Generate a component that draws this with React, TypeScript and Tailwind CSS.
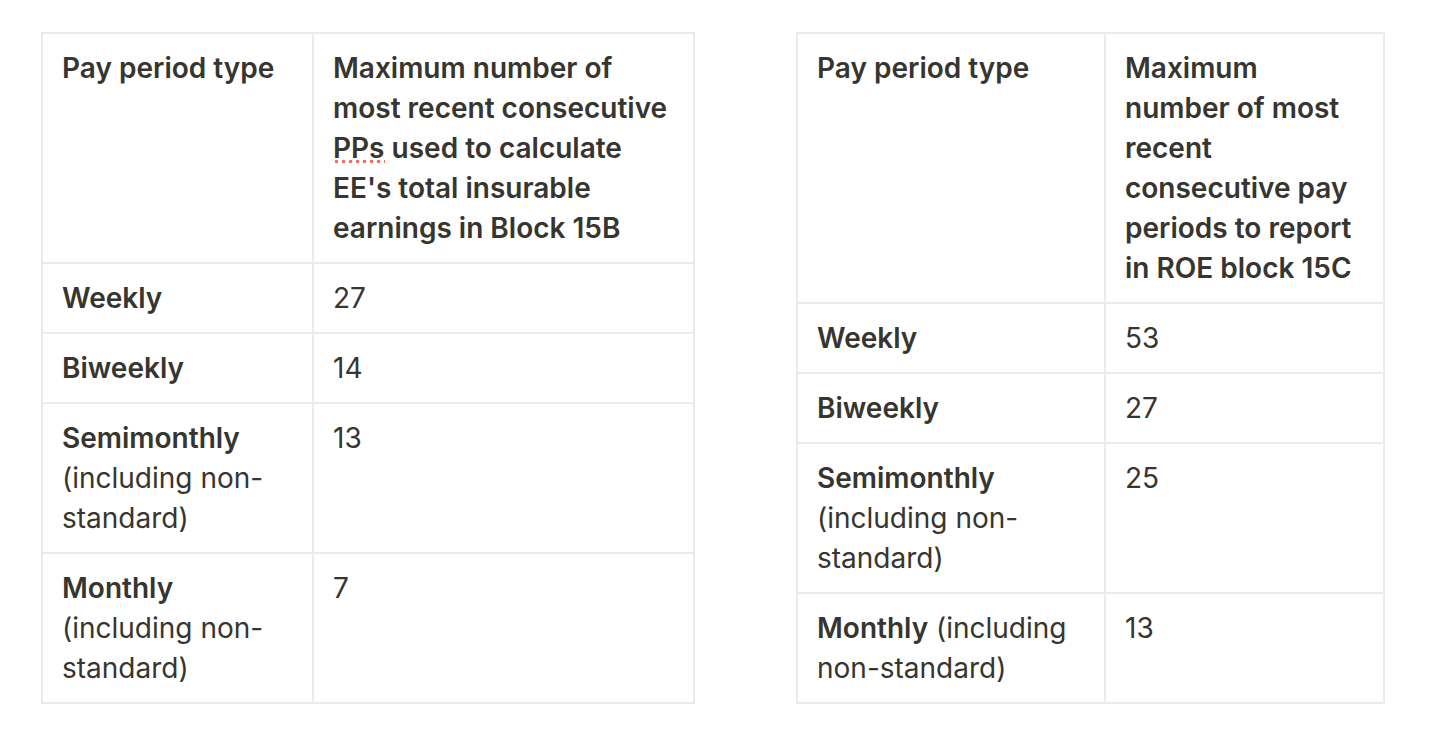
import React from 'react';

type Row = { label: string; note?: string; inline?: boolean; value: string };

const leftRows: Row[] = [
    { label: 'Weekly', value: '27' },
    { label: 'Biweekly', value: '14' },
    { label: 'Semimonthly', note: '(including non-standard)', value: '13' },
    { label: 'Monthly', note: '(including non-standard)', value: '7' },
];

const rightRows: Row[] = [
    { label: 'Weekly', value: '53' },
    { label: 'Biweekly', value: '27' },
    { label: 'Semimonthly', note: '(including non-standard)', value: '25' },
    { label: 'Monthly', note: '(including non-standard)', inline: true, value: '13' },
];

// red dotted spellcheck mark under a word
function Misspelled({ children }: { children: React.ReactNode }) {
    return (
        <span className="relative inline-block">
            {children}
            <span className="absolute left-0 right-0 top-[31px] h-[5px] bg-[radial-gradient(circle,#ec7467_1.6px,transparent_2.1px)] bg-[length:7px_5px] bg-repeat-x" />
        </span>
    );
}

function PayTable({ widths, header, rows }: { widths: [number, number]; header: React.ReactNode[]; rows: Row[] }) {
    const cell = 'border-2 border-[#ebebea] px-[19px] py-[14px] align-top';
    return (
        <table
            className="table-fixed border-collapse text-[#37352f] text-[28px] leading-[40px]"
            style={{ width: widths[0] + widths[1] }}
        >
            <colgroup>
                <col style={{ width: widths[0] }} />
                <col style={{ width: widths[1] }} />
            </colgroup>
            <tbody>
                <tr className="font-semibold">
                    <td className={cell}>Pay period type</td>
                    <td className={cell}>
                        {header.map((line, i) => (
                            <div key={i} className="whitespace-nowrap">{line}</div>
                        ))}
                    </td>
                </tr>
                {rows.map((r) => (
                    <tr key={r.label}>
                        <td className={cell}>
                            <span className="font-semibold">{r.label}</span>
                            {r.note && (r.inline ? ' ' : <br />)}
                            {r.note}
                        </td>
                        <td className={cell}>{r.value}</td>
                    </tr>
                ))}
            </tbody>
        </table>
    );
}

export default function App() {
    return (
        <div className="w-[1430px] h-[734px] bg-white font-['Inter',sans-serif] antialiased">
            <div className="flex items-start gap-[101px] pl-[41px] pt-[32px]">
                <PayTable
                    widths={[271, 381]}
                    rows={leftRows}
                    header={[
                        'Maximum number of',
                        'most recent consecutive',
                        <>
                            <Misspelled>PPs</Misspelled> used to calculate
                        </>,
                        "EE's total insurable",
                        'earnings in Block 15B',
                    ]}
                />
                <PayTable
                    widths={[308, 279]}
                    rows={rightRows}
                    header={[
                        'Maximum',
                        'number of most',
                        'recent',
                        'consecutive pay',
                        'periods to report',
                        'in ROE block 15C',
                    ]}
                />
            </div>
        </div>
    );
}
